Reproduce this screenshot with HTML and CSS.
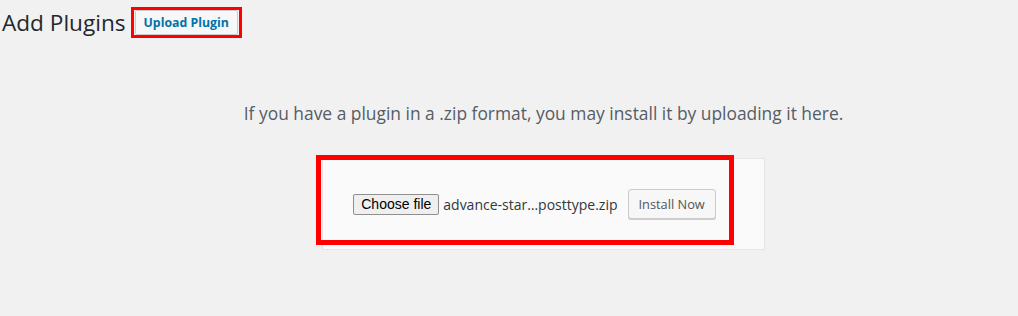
FILE: index.html
```html
<!DOCTYPE html>
<html>

<head>
    <meta name="viewport" content="width=device-width, initial-scale=1">
    <title>Add Plugins</title>
    <link rel="stylesheet" href="styles.css">
</head>

<body>
    <div class="wrap">
        <div class="page-header">
            <h1 class="page-title">Add Plugins</h1>
            <span class="highlight">
                <a class="page-title-action" href="#">Upload Plugin</a>
            </span>
        </div>

        <div class="upload-plugin">
            <p class="install-help">If you have a plugin in a .zip format, you may install it by uploading it here.</p>

            <div class="upload-form-holder">
                <form class="wp-upload-form">
                    <button type="button" class="choose-file">Choose file</button>
                    <span class="file-name">advance-star…posttype.zip</span>
                    <button type="submit" class="button">Install Now</button>
                </form>
                <div class="form-marker"></div>
            </div>
        </div>
    </div>
</body>

</html>
```

FILE: styles.css
```css
body {
    margin: 0;
    background: #f1f1f1;
    color: #23282d;
    font-family: "Open Sans", sans-serif;
}

.wrap {
    padding: 0 0 0 2px;
}

.page-header {
    display: flex;
    align-items: center;
    padding-top: 7px;
}

.page-title {
    margin: 0;
    font-size: 22.6px;
    font-weight: 400;
    line-height: 31px;
    color: #23282d;
}

.highlight {
    display: inline-block;
    margin-left: 5px;
    border: 3px solid #ff0000;
    padding: 0 1px 0 1px;
}

.page-title-action {
    display: inline-block;
    padding: 3px 8px;
    border: 1px solid #cccccc;
    border-radius: 2px;
    background: #f7f7f7;
    color: #0073aa;
    font-size: 12.3px;
    font-weight: 700;
    line-height: 17px;
    text-decoration: none;
}

.upload-plugin {
    padding-left: 67px;
    text-align: center;
}

.install-help {
    margin: 0;
    padding: 63px 0 33px;
    color: #555d66;
    font-size: 17.4px;
    line-height: 24px;
}

.upload-form-holder {
    position: relative;
    display: inline-block;
}

.wp-upload-form {
    display: flex;
    align-items: center;
    background: #fafafa;
    border: 1px solid #e5e5e5;
    padding: 30px 48px 30px 30px;
}

.choose-file {
    height: 21px;
    padding: 0 7px;
    margin: 0;
    border: 1px solid #8f8f8f;
    border-radius: 2px;
    background: #efefef;
    color: #000000;
    font-family: "Liberation Sans", Arial, sans-serif;
    font-size: 14px;
}

.file-name {
    margin-left: 4px;
    color: #32373c;
    font-size: 14px;
}

.button {
    height: 30px;
    margin-left: 10px;
    padding: 0 10px 1px;
    border: 1px solid #cccccc;
    border-radius: 3px;
    background: #f7f7f7;
    box-shadow: 0 1px 0 #cccccc;
    color: #555555;
    font-family: "Open Sans", sans-serif;
    font-size: 12.8px;
}

/* annotation box drawn over the form */
.form-marker {
    position: absolute;
    left: -6px;
    top: -3px;
    width: 408px;
    height: 80px;
    border: 5px solid #ff0000;
    pointer-events: none;
}
```
